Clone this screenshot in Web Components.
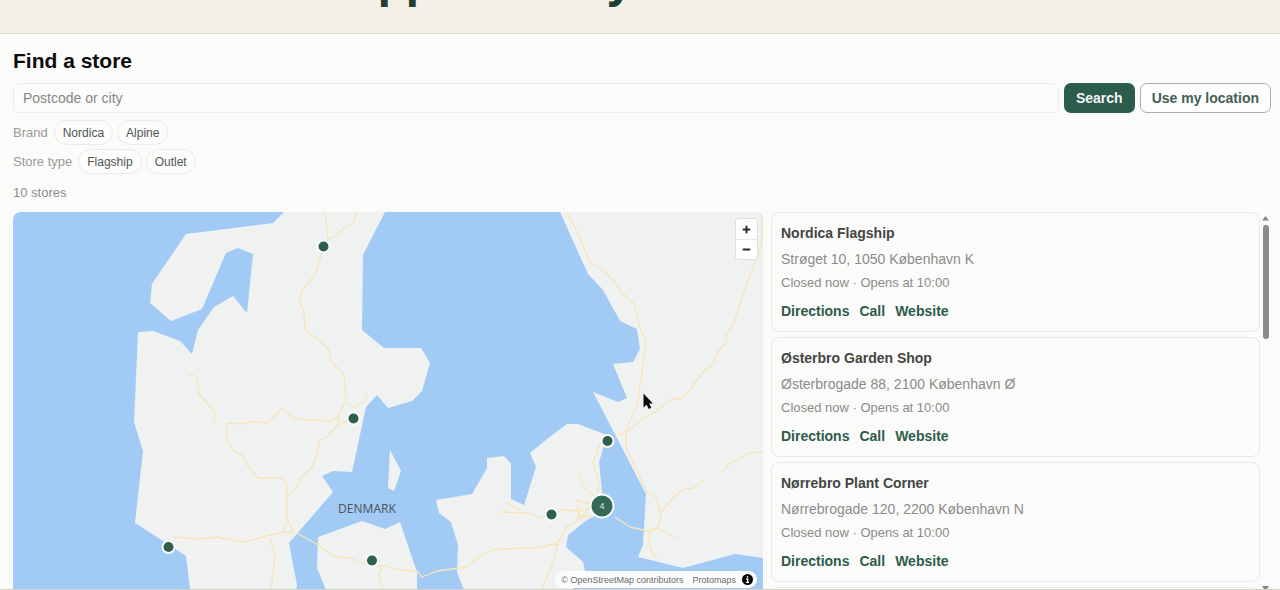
<!DOCTYPE html>
<html lang="en">
<head>
<meta charset="utf-8">
<title>Find a store</title>
<style>
  html, body { height: 100%; }
  body {
    margin: 0;
    background: #fbfbf9;
    font-family: "Liberation Sans", Arial, sans-serif;
    color: #8a8c8a;
    overflow: hidden;
  }
</style>
</head>
<body>
<store-page>
  <page-banner>Support every</page-banner>
  <store-finder>
    <search-bar></search-bar>
    <filter-group label="Brand"><filter-chip>Nordica</filter-chip><filter-chip>Alpine</filter-chip></filter-group>
    <filter-group label="Store type"><filter-chip>Flagship</filter-chip><filter-chip>Outlet</filter-chip></filter-group>
    <span slot="status">10 stores</span>
    <store-map slot="map"></store-map>
    <store-list slot="list">
      <store-card name="Nordica Flagship" address="Strøget 10, 1050 København K"></store-card>
      <store-card name="Østerbro Garden Shop" address="Østerbrogade 88, 2100 København Ø"></store-card>
      <store-card name="Nørrebro Plant Corner" address="Nørrebrogade 120, 2200 København N"></store-card>
    </store-list>
  </store-finder>
</store-page>

<script>
const define = (name, render) => customElements.define(name, class extends HTMLElement {
  constructor() {
    super();
    this.attachShadow({ mode: "open" });
  }
  connectedCallback() {
    const template = document.createElement("template");
    template.innerHTML = "<style>*{box-sizing:border-box}</style>" + render(this);
    this.shadowRoot.replaceChildren(template.content.cloneNode(true));
  }
});

define("store-page", () => `
  <style>
    :host { display: flex; flex-direction: column; height: 100vh; border-bottom: 1px solid #d6d3c9; box-sizing: border-box; }
  </style>
  <slot></slot>`);

define("page-banner", () => `
  <style>
    :host { display: flex; flex: none; align-items: flex-end; height: 34px; box-sizing: border-box; padding: 0 0 32px 325px;
      overflow: hidden; background: #f3f0e6; border-bottom: 1px solid #e6ddd0; }
    h1 { margin: 0; font: 700 44px/44px "Noto Sans", sans-serif; color: #213f33; white-space: nowrap; }
  </style>
  <h1><slot></slot></h1>`);

define("store-finder", () => `
  <style>
    :host { display: flex; flex-direction: column; flex: 1; min-height: 0; padding: 13px 9px 0 13px; }
    h2 { margin: 0 0 8px; font-size: 21px; line-height: 28px; color: #0c0c0c; }
    .controls { display: flex; flex-direction: column; gap: 4px; }
    .status { margin: 9px 0 9px; font-size: 13px; line-height: 20px; }
    .results { display: grid; grid-template-columns: 3fr 2fr; grid-template-rows: minmax(0, 1fr); gap: 8px; flex: 1; min-height: 0; }
  </style>
  <h2>Find a store</h2>
  <div class="controls"><slot></slot></div>
  <div class="status" role="status"><slot name="status"></slot></div>
  <div class="results"><slot name="map"></slot><slot name="list"></slot></div>`);

define("search-bar", () => `
  <style>
    :host { display: block; margin-bottom: 3px; }
    form { display: flex; gap: 5px; margin: 0; }
    input, button { height: 30px; border-radius: 7px; font: 14px "Liberation Sans", Arial, sans-serif; }
    input { flex: 1; min-width: 0; padding: 0 9px; border: 1px solid #ececea; background: #fcfcfb; color: #333; }
    input::placeholder { color: #858786; opacity: 1; }
    button { padding: 0 11px; font-weight: 700; white-space: nowrap; }
    .primary { padding: 0 12px; border: 0; background: #2b5c4e; color: #f4f9f6; }
    .secondary { border: 1px solid #a8b0ac; background: #fcfdfc; color: #446055; }
  </style>
  <form>
    <input type="text" aria-label="Postcode or city" placeholder="Postcode or city">
    <button class="primary" type="button">Search</button>
    <button class="secondary" type="button">Use my location</button>
  </form>`);

define("filter-group", host => `
  <style>
    :host { display: block; }
    div { display: flex; align-items: center; gap: 4px; font-size: 13px; line-height: 20px; color: #9a9c9a; }
    span { margin-right: 2px; }
  </style>
  <div role="group" aria-labelledby="label"><span id="label">${host.getAttribute("label")}</span><slot></slot></div>`);

define("filter-chip", () => `
  <style>
    :host { display: block; }
    button { display: block; height: 25px; padding: 0 8px; border: 1px solid #ebebe9; border-radius: 13px; background: #fcfcfb;
      font: 12px/16px "Liberation Sans", Arial, sans-serif; color: #505753; }
  </style>
  <button type="button" aria-pressed="false"><slot></slot></button>`);

define("store-list", () => `
  <style>
    :host { display: flex; min-width: 0; min-height: 0; }
    .cards { display: flex; flex-direction: column; gap: 5px; flex: 1; min-width: 0; overflow: hidden; }
    .next { flex: none; height: 120px; border: 1px solid #e9e9e7; border-radius: 8px; }
    .bar { display: flex; flex-direction: column; align-items: center; width: 11px; padding: 3px 0 0; }
    .thumb { width: 6px; height: 114px; margin: 4px 0 auto; border-radius: 3px; background: #8b8b89; }
    svg { display: block; flex: none; fill: #858583; }
  </style>
  <div class="cards"><slot></slot><div class="next"></div></div>
  <div class="bar" aria-hidden="true">
    <svg width="7" height="6" viewBox="0 0 7 6"><path d="M3.5 1 7 5.5H0z"/></svg>
    <div class="thumb"></div>
    <svg width="7" height="3" viewBox="0 0 7 3"><path d="M0 0h7L5 3H2z"/></svg>
  </div>`);

define("store-card", host => `
  <style>
    :host { display: block; flex: none; }
    article { height: 120px; padding: 10px 9px; border: 1px solid #e9e9e7; border-radius: 8px; background: #fbfbf9; }
    h3, p { margin: 0; line-height: 20px; }
    h3 { margin-bottom: 6px; font-size: 14px; color: #434644; }
    .address { margin-bottom: 4px; font-size: 14px; }
    .hours { margin-bottom: 8px; font-size: 13px; }
    nav { display: flex; gap: 10px; font-size: 14px; font-weight: 700; line-height: 20px; }
    a { color: #2d5c4a; text-decoration: none; }
  </style>
  <article>
    <h3>${host.getAttribute("name")}</h3>
    <p class="address">${host.getAttribute("address")}</p>
    <p class="hours">Closed now · Opens at 10:00</p>
    <nav aria-label="${host.getAttribute("name")}"><a href="#directions">Directions</a><a href="#call">Call</a><a href="#website">Website</a></nav>
  </article>`);

define("store-map", () => {
  const pins = [[323.5, 246.5], [353.5, 418.5], [168.5, 547], [372, 560.5], [607.5, 441], [551.5, 514.5]];
  return `
  <style>
    :host { display: block; position: relative; min-width: 0; min-height: 0; overflow: hidden; border-radius: 8px 8px 0 0; background: #a1cbf5; }
    .canvas { display: block; width: 100%; height: 100%; }
    .land { fill: #eff2f1; }
    .roads { fill: none; stroke: #f8e4b8; stroke-width: 1.3; stroke-linejoin: round; }
    .pins { fill: #2f5f4f; stroke: #fafcfb; stroke-width: 2; }
    .country { font: 12px "Noto Sans", sans-serif; fill: #50575c; }
    .count { font: 9px "Liberation Sans", Arial, sans-serif; fill: #dce9e3; text-anchor: middle; }
    .zoom { position: absolute; top: 7px; right: 6px; display: flex; flex-direction: column; width: 21px; border-radius: 3px;
      background: #fff; box-shadow: 0 0 0 1px #dcdfde; overflow: hidden; }
    .zoom button { display: grid; place-items: center; height: 20px; padding: 0; border: 0; background: none; }
    .zoom button + button { border-top: 1px solid #e6e6e6; }
    .zoom path { stroke: #2c2c2c; stroke-width: 2; stroke-linecap: round; }
    .credits { position: absolute; right: 6px; bottom: 1px; display: flex; align-items: center; gap: 9px; height: 17px; padding: 0 4px 0 6px;
      border-radius: 9px; background: #fbfcfc; font-size: 9px; line-height: 12px; color: #6a6c6b; white-space: nowrap; }
    .credits a { color: inherit; text-decoration: none; }
    .credits svg { display: block; margin-left: -3px; }
  </style>
  <svg class="canvas" viewBox="13 212 750 377" preserveAspectRatio="xMidYMid slice" role="img" aria-label="Map of stores">
    <g class="land">
      <path d="M284 212 273 223 250 226 186 234 152 284 150 303 171 321 202 309 226 253 238 248 253 254 247 313 233 296 214 307 198 330 192 354 180 341 153 331 138 332 134 422 143 451 135 523 163 541 186 556 190 589H296L297 585 289 543 333 492 322 476 333 471 352 472 366 407 377 395 388 408 412 401 422 391 430 363 421 348H384L362 330 363 255 385 212z"/>
      <path d="M390 450 401 471 394 491 388 488z"/>
      <path d="M318 537 362 521 385 529 400 522 417 572V590H326L317 568z"/>
      <path d="M436 500 472 494 487 468V458L504 456 511 464V499L524 505 536 467 530 453 547 439 567 424H578L607 435 599 462 602 492 600 513 587 520 568 535 566 547 583 562 585 572 572 590H464L457 572 458 545 451 522 439 513z"/>
      <path d="M560 212 588 274 603 290 620 321 637 329 640 349 633 362 613 364 627 398 618 402 593 392 646 494 643 545 638 557 683 568 735 554 763 558V212z"/>
    </g>
    <g class="roads">
      <path d="M325 212 328 239 338 235 343 228 353 224 357 212M322 252 315 275 302 290 300 302 304 313 305 331 317 338 329 350 331 361 344 375 346 400 340 412 337 426 327 437 320 440 317 455 312 467 301 478 297 487 290 494"/>
      <path d="M346 404 355 407 365 402 367 394M337 427 348 420M227 423 243 424 250 422 268 423 282 408 295 419 330 421 338 417M227 423V438L232 449 243 456 246 463 258 478 282 478 287 483V518L294 533 283 532 287 522"/>
      <path d="M187 373 197 377 199 394 215 412 214 423M174 537 200 539 217 537 243 542 283 532M270 538 275 557 271 589M297 533 320 546 333 556 350 558 370 566 387 566 400 570 417 571 422 577 437 571 467 567 483 554 497 549 537 548 558 543 566 527 580 519 590 507M382 567 379 575 383 589M558 543 553 563 542 589"/>
      <path d="M500 512 528 513 542 518 563 510 580 511 590 507M505 502 520 510M575 500 590 504M577 505 580 517 592 516M578 474 585 488 595 497M600 443 593 463 599 483 597 500M579 512 577 520M615 517 630 527 647 531 657 528 677 538"/>
      <path d="M567 212 580 238 590 262 604 271 617 285 620 291 635 305 638 322 646 343 643 366 639 392 637 406 626 430V448L647 492 657 498 661 518 657 528 649 533 650 548 657 560"/>
      <path d="M618 436 632 428 643 418 655 412 670 400 682 398 690 390 703 372 714 363 718 352 727 341 726 335 733 325 739 307 748 280 757 258 762 242V212M660 513 673 498 682 490 693 488 705 480M722 472 730 463 740 459 748 453 763 452"/>
    </g>
    <text class="country" x="338" y="513">DENMARK</text>
    <g class="pins">
      ${pins.map(([x, y]) => `<circle cx="${x}" cy="${y}" r="6"/>`).join("")}
      <circle cx="602" cy="506" r="11.5" fill="#356a58"/>
    </g>
    <text class="count" x="602" y="509">4</text>
    <path d="M643.500 393.500V407.500L646.500 404.800 648.900 409 651.300 407.800 649.200 403.500H652.800z" fill="#0b0b0b"/>
  </svg>
  <div class="zoom">
    <button type="button" aria-label="Zoom in"><svg width="9" height="9" viewBox="0 0 9 9"><path d="M4.5 1.500v6M1.500 4.500h6"/></svg></button>
    <button type="button" aria-label="Zoom out"><svg width="9" height="9" viewBox="0 0 9 9"><path d="M1.500 4.500h6"/></svg></button>
  </div>
  <div class="credits">
    <a href="#openstreetmap">© OpenStreetMap contributors</a><a href="#protomaps">Protomaps</a>
    <svg width="11" height="11" viewBox="0 0 11 11" aria-hidden="true"><circle cx="5.500" cy="5.500" r="5.500" fill="#0a0a0a"/><path d="M5.500 2v1.600M4.300 5h1.400v3.200M4 8.400h3" fill="none" stroke="#fff" stroke-width="1.300"/></svg>
  </div>`;
});
</script>
</body>
</html>
